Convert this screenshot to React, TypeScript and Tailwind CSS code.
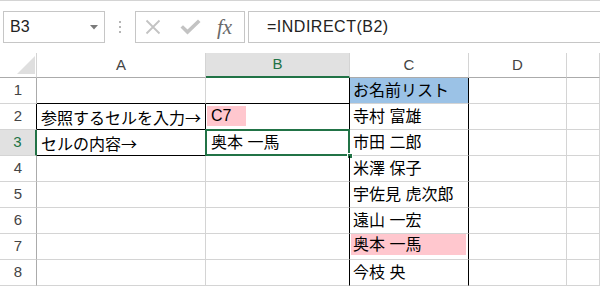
import React from 'react';

type Row = {
  n: number;
  a?: string;
  b?: string;
  c?: string;
};

const rows: Row[] = [
  { n: 1, c: 'お名前リスト' },
  { n: 2, a: '参照するセルを入力→', b: 'C7', c: '寺村 富雄' },
  { n: 3, a: 'セルの内容→', b: '奥本 一馬', c: '市田 二郎' },
  { n: 4, c: '米澤 保子' },
  { n: 5, c: '宇佐見 虎次郎' },
  { n: 6, c: '遠山 一宏' },
  { n: 7, c: '奥本 一馬' },
  { n: 8, c: '今枝 央' },
];

const cellFont =
  "font-['Liberation_Sans','Noto_Sans_CJK_JP',sans-serif] text-[16px] leading-[20px] text-black whitespace-nowrap";
const jpFont =
  "font-['Noto_Sans_CJK_JP',sans-serif] text-[16px] leading-[20px] text-black whitespace-nowrap";

function RowHeader({ n }: { n: number }) {
  let cls =
    'h-[26px] flex items-center justify-center border-b border-b-[#d4d4d4] border-r bg-white text-[#444] border-r-[#ababab]';
  if (n === 2)
    cls =
      'h-[26px] flex items-center justify-center border-b border-b-[#d4d4d4] border-r bg-white text-[#444] border-r-black';
  if (n === 3)
    cls =
      'h-[26px] flex items-center justify-center border-b border-b-[#d4d4d4] border-r-2 bg-[#e1e1e1] text-[#217346] border-r-[#217346]';
  return (
    <div className={cls + " font-['Liberation_Sans',sans-serif] text-[15px]"}>
      {n}
    </div>
  );
}

function CellA({ r }: { r: Row }) {
  const black = r.n >= 1 && r.n <= 3;
  const rb = r.n === 2 || r.n === 3;
  const cls =
    'h-[26px] flex items-center pl-[4px] border-b border-r ' +
    (black ? 'border-b-black ' : 'border-b-[#d4d4d4] ') +
    (rb ? 'border-r-black' : 'border-r-[#d4d4d4]');
  return (
    <div className={cls}>
      <span className={jpFont}>{r.a ?? ''}</span>
    </div>
  );
}

function CellB({ r }: { r: Row }) {
  const black = r.n >= 1 && r.n <= 3;
  const cls =
    'h-[26px] relative flex border-b border-r border-r-black ' +
    (black ? 'border-b-black' : 'border-b-[#d4d4d4]');
  if (r.n === 2) {
    return (
      <div className={cls + ' items-start pt-[2px]'}>
        <span
          className={
            cellFont +
            ' ml-[1px] h-[20px] w-[39px] pl-[4px] bg-[#ffc7ce] flex items-center'
          }
        >
          {r.b}
        </span>
      </div>
    );
  }
  if (r.n === 3) {
    return (
      <div className={cls + ' items-center pl-[5px]'}>
        <span className={cellFont}>{r.b}</span>
        <div className="absolute left-[-1px] top-[-1px] right-[-1px] bottom-[-1px] border-2 border-[#217346]" />
        <div className="absolute right-[-4px] bottom-[-4px] w-[6px] h-[6px] bg-[#217346] border border-white" />
      </div>
    );
  }
  return <div className={cls} />;
}

function CellC({ r }: { r: Row }) {
  const base = 'h-[26px] flex border-b border-b-[#d4d4d4] border-r border-r-black';
  if (r.n === 1) {
    return (
      <div className={base + ' items-center pl-[3px] bg-[#9bc2e6]'}>
        <span className={cellFont}>{r.c}</span>
      </div>
    );
  }
  if (r.n === 7) {
    return (
      <div className={base + ' items-start'}>
        <span
          className={
            cellFont +
            ' ml-[1px] h-[21px] w-[115px] pl-[2px] bg-[#ffc7ce] flex items-center'
          }
        >
          {r.c}
        </span>
      </div>
    );
  }
  return (
    <div className={base + ' items-center pl-[3px]'}>
      <span className={cellFont}>{r.c}</span>
    </div>
  );
}

function PlainCell() {
  return <div className="h-[26px] border-b border-r border-[#d4d4d4]" />;
}

export default function App() {
  return (
    <div className="w-[600px] h-[286px] overflow-hidden bg-white">
      {/* Formula bar */}
      <div className="h-[53px] border-t border-[#d4d4d4] flex items-start pt-[10px] overflow-hidden">
        <div className="ml-[3px] w-[102px] h-[32px] shrink-0 border border-[#c6c6c6] flex items-center justify-between pl-[6px] pr-[6px]">
          <span className="font-['Liberation_Sans',sans-serif] text-[16px] text-[#222]">
            B3
          </span>
          <svg width="8" height="5" viewBox="0 0 8 5">
            <polygon points="0,0 8,0 4,4.5" fill="#7a7a7a" />
          </svg>
        </div>
        <div className="w-[30px] h-[32px] shrink-0 flex flex-col items-center justify-center gap-[3px]">
          <div className="w-[2px] h-[2px] bg-[#b5b5b5]" />
          <div className="w-[2px] h-[2px] bg-[#b5b5b5]" />
          <div className="w-[2px] h-[2px] bg-[#b5b5b5]" />
        </div>
        <div className="w-[110px] h-[32px] shrink-0 border border-[#c6c6c6] flex items-center">
          <svg className="ml-[9px]" width="16" height="16" viewBox="0 0 16 16">
            <path d="M1.5 1.5 L14.5 14.5 M14.5 1.5 L1.5 14.5" stroke="#c3c3c3" strokeWidth="1.8" fill="none" />
          </svg>
          <svg className="ml-[19px]" width="21" height="16" viewBox="0 0 21 16">
            <path d="M0.5 8.5 L3 6.2 L7.5 10.5 L18 0.5 L20.5 3 L7.5 15.5 Z" fill="#c3c3c3" />
          </svg>
          <span className="ml-[16px] font-['Liberation_Serif',serif] italic text-[21px] leading-[24px] text-[#6a6a6a]">
            fx
          </span>
        </div>
        <div className="ml-[3px] w-[420px] h-[32px] shrink-0 border border-[#c6c6c6] flex items-center pl-[18px]">
          <span className="font-['Liberation_Sans',sans-serif] text-[16px] tracking-[0.5px] text-[#222]">
            =INDIRECT(B2)
          </span>
        </div>
      </div>

      {/* Grid */}
      <div className="grid grid-cols-[37px_169px_144px_119px_98px_33px]">
        {/* Header row */}
        <div className="h-[25px] border-r border-r-[#d4d4d4] border-b border-b-[#ababab] bg-white flex items-end justify-end pr-[1px] pb-[3px]">
          <svg width="18" height="18" viewBox="0 0 18 18">
            <polygon points="18,0 18,18 0,18" fill="#dfdfdf" />
          </svg>
        </div>
        <div className="h-[25px] border-r border-r-[#d4d4d4] border-b border-b-[#ababab] bg-white flex items-center justify-center font-['Liberation_Sans',sans-serif] text-[15px] text-[#444]">
          A
        </div>
        <div className="h-[25px] border-r border-r-[#d4d4d4] border-b-2 border-b-[#217346] bg-[#e1e1e1] flex items-center justify-center font-['Liberation_Sans',sans-serif] text-[15px] text-[#217346]">
          B
        </div>
        <div className="h-[25px] border-r border-r-[#d4d4d4] border-b border-b-[#ababab] bg-white flex items-center justify-center font-['Liberation_Sans',sans-serif] text-[15px] text-[#444]">
          C
        </div>
        <div className="h-[25px] border-r border-r-[#d4d4d4] border-b border-b-[#ababab] bg-white flex items-center justify-center font-['Liberation_Sans',sans-serif] text-[15px] text-[#444]">
          D
        </div>
        <div className="h-[25px] border-r border-r-[#d4d4d4] border-b border-b-[#ababab] bg-white" />

        {rows.map((r) => (
          <React.Fragment key={r.n}>
            <RowHeader n={r.n} />
            <CellA r={r} />
            <CellB r={r} />
            <CellC r={r} />
            <PlainCell />
            <PlainCell />
          </React.Fragment>
        ))}
      </div>
    </div>
  );
}
